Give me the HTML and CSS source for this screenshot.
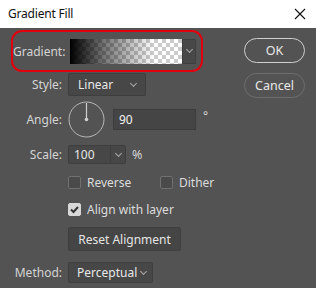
FILE: index.html
```html
<!DOCTYPE html>
<html lang="en">

<head>
    <meta charset="UTF-8">
    <title>Gradient Fill</title>
    <link rel="stylesheet" href="styles.css">
</head>

<body>
    <div class="titlebar">
        <span class="title">Gradient Fill</span>
        <svg class="close" width="12" height="12" viewBox="0 0 12 12">
            <path d="M1 1 L11 11 M11 1 L1 11" stroke="#111" stroke-width="1.1" fill="none" />
        </svg>
    </div>
    <div class="dialog">
        <div class="form">
            <div class="row grad-row">
                <label class="lbl grad-lbl">Gradient:</label>
                <div class="swatch"></div>
                <div class="swatch-arrow"><span class="chev"></span></div>
            </div>
            <div class="row style-row">
                <label class="lbl">Style:</label>
                <div class="select style-select">Linear<span class="chev"></span></div>
            </div>
            <div class="row angle-row">
                <label class="lbl">Angle:</label>
                <svg class="dial" width="37" height="37" viewBox="0 0 37 37">
                    <circle cx="18.5" cy="18.5" r="17.5" fill="none" stroke="#b8b8b8" stroke-width="1" />
                    <line x1="18.5" y1="2" x2="18.5" y2="18" stroke="#cfcfcf" stroke-width="1.2" />
                    <circle cx="18.5" cy="18.5" r="1.8" fill="#cfcfcf" />
                </svg>
                <div class="field angle-field">90</div>
                <span class="unit deg">°</span>
            </div>
            <div class="row scale-row">
                <label class="lbl">Scale:</label>
                <div class="combo">
                    <span class="combo-val">100</span>
                    <span class="combo-btn"><span class="chev"></span></span>
                </div>
                <span class="unit pct">%</span>
            </div>
            <div class="row checks-row">
                <span class="check reverse"><span class="box"></span>Reverse</span>
                <span class="check"><span class="box"></span>Dither</span>
            </div>
            <div class="row align-row">
                <span class="check"><span class="box on">
                        <svg width="13" height="13" viewBox="0 0 13 13">
                            <path d="M3 6.5 L5.5 9 L10 4" stroke="#333" stroke-width="2" fill="none" />
                        </svg>
                    </span>Align with layer</span>
            </div>
            <div class="row reset-row">
                <div class="btn-reset">Reset Alignment</div>
            </div>
            <div class="row method-row">
                <label class="lbl">Method:</label>
                <div class="select method-select">Perceptual<span class="chev"></span></div>
            </div>
        </div>
        <div class="buttons">
            <div class="btn ok">OK</div>
            <div class="btn cancel">Cancel</div>
        </div>
    </div>
</body>

</html>
```

FILE: styles.css
```css
* {
    margin: 0;
    padding: 0;
    box-sizing: border-box;
}

body {
    width: 316px;
    height: 288px;
    overflow: hidden;
    background-color: #535353;
    font-family: "Noto Sans", "Open Sans", sans-serif;
    font-size: 12px;
    color: #d4d4d4;
}

.titlebar {
    height: 28px;
    background-color: #fff;
    display: flex;
    align-items: center;
    justify-content: space-between;
    padding: 0 10px 1px 8px;
}

.title {
    color: #111;
    font-size: 12px;
    letter-spacing: -0.2px;
}

.dialog {
    display: flex;
}

.form {
    width: 232px;
    display: flex;
    flex-direction: column;
}

.row {
    display: flex;
    align-items: center;
}

.lbl {
    width: 62px;
    margin-right: 6px;
    text-align: right;
    white-space: nowrap;
}

/* gradient row with the red highlight */
.grad-row {
    margin-top: 2px;
    margin-left: 11px;
    width: 192px;
    height: 42px;
    border: 2px solid #e2000f;
    border-radius: 11px;
}

.grad-row .grad-lbl {
    width: 49px;
    margin-right: 8px;
}

.swatch {
    width: 112px;
    height: 25px;
    background-image:
        linear-gradient(to right, #000, rgba(0, 0, 0, 0.55) 30%, rgba(0, 0, 0, 0) 75%),
        conic-gradient(#cbcbcb 25%, #fff 0 50%, #cbcbcb 0 75%, #fff 0);
    background-size: 100% 100%, 8px 8px;
}

.swatch-arrow {
    width: 14px;
    height: 25px;
    background-color: #484848;
    border: 1px solid #3f3f3f;
    display: flex;
    align-items: center;
    justify-content: center;
}

.chev {
    display: inline-block;
    width: 5px;
    height: 5px;
    border-right: 1px solid #a8a8a8;
    border-bottom: 1px solid #a8a8a8;
    transform: rotate(45deg);
    margin-top: -3px;
}

.select {
    height: 23px;
    background-color: #474747;
    border: 1px solid #3e3e3e;
    border-radius: 2px;
    display: flex;
    align-items: center;
    justify-content: space-between;
    padding: 0 9px 0 9px;
    color: #e8e8e8;
    font-size: 12px;
}

.style-row {
    margin-top: 1px;
    height: 23px;
}

.style-select {
    width: 78px;
}

.angle-row {
    margin-top: 5px;
    height: 37px;
}

.dial {
    display: block;
}

.field {
    margin-left: 8px;
    width: 83px;
    height: 21px;
    background-color: #454545;
    border: 1px solid #3c3c3c;
    color: #f2f2f2;
    font-size: 12px;
    padding-left: 5px;
    line-height: 19px;
}

.unit {
    margin-left: 7px;
}

.deg {
    margin-top: -8px;
}

.scale-row {
    margin-top: 7px;
    height: 19px;
}

.combo {
    display: flex;
    width: 58px;
    height: 19px;
    background-color: #474747;
    border: 1px solid #3e3e3e;
    border-radius: 2px;
    color: #e8e8e8;
    font-size: 12px;
}

.combo-val {
    width: 42px;
    padding-left: 5px;
    line-height: 17px;
    border-right: 1px solid #3e3e3e;
}

.combo-btn {
    flex: 1;
    display: flex;
    align-items: center;
    justify-content: center;
}

.pct {
    margin-left: 6px;
    font-size: 12.5px;
}

.checks-row {
    margin-top: 12px;
    height: 13px;
    padding-left: 68px;
}

.check {
    display: flex;
    align-items: center;
    height: 13px;
    color: #dcdcdc;
    font-size: 12px;
}

.reverse {
    width: 92px;
}

.box {
    width: 13px;
    height: 13px;
    border: 1px solid #707070;
    background-color: #4a4a4a;
    border-radius: 2px;
    margin-right: 6px;
    display: flex;
}

.box.on {
    background-color: #d8d8d8;
    border-color: #d8d8d8;
}

.box.on svg {
    margin: -1px;
}

.align-row {
    margin-top: 14px;
    height: 13px;
    padding-left: 68px;
}

.reset-row {
    margin-top: 11px;
    height: 24px;
    padding-left: 68px;
}

.btn-reset {
    width: 113px;
    height: 24px;
    background-color: #454545;
    border: 1px solid #3f3f3f;
    border-radius: 2px;
    color: #e4e4e4;
    font-size: 12px;
    display: flex;
    align-items: center;
    justify-content: center;
}

.method-row {
    margin-top: 11px;
    height: 21px;
}

.method-select {
    width: 85px;
    height: 21px;
    padding: 0 6px 0 8px;
}

.buttons {
    display: flex;
    flex-direction: column;
    gap: 10px;
    padding-top: 10px;
    margin-left: 12px;
}

.btn {
    width: 61px;
    height: 25px;
    border-radius: 13px;
    display: flex;
    align-items: center;
    justify-content: center;
    font-size: 12.5px;
    color: #e8e8e8;
}

.ok {
    border: 1.5px solid #cfcfcf;
}

.cancel {
    border: 1px solid #6e6e6e;
}
```
